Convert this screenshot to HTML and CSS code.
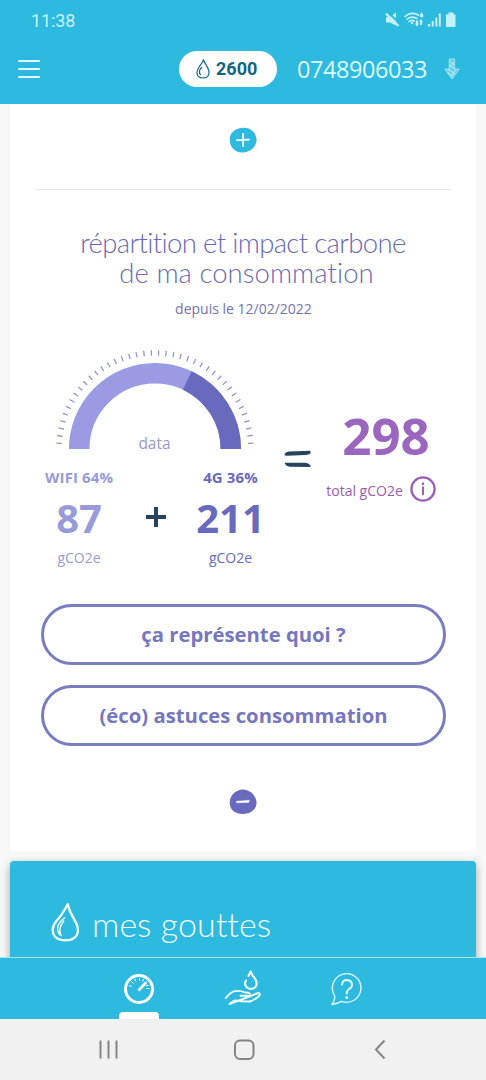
FILE: index.html
```html
<!DOCTYPE html>
<html lang="fr">
<head>
<meta charset="utf-8">
<title>Suivi conso</title>
<link rel="stylesheet" href="styles.css">
</head>
<body>
<div class="phone">
  <div class="status">
    <span class="time">11:38</span>
    <svg class="status-icons" width="74" height="18" viewBox="0 0 74 18">
      <g fill="#c5f1fb">
        <path d="M2 6h4l6-4.500v13L6 11.500H2z"/>
        <rect x="44" y="13" width="2.200" height="2.500"/><rect x="47.700" y="10" width="2" height="5.500"/><rect x="51.300" y="6.500" width="2" height="9"/><rect x="54.800" y="2.500" width="2" height="13"/>
        <path d="M64.500 1.500h5v2h2v12.500h-9.500V3.500h2.500z"/>
        <circle cx="28" cy="12" r="1.300"/>
        <path d="M37.500 1l1.800 3.200a1.800 1.800 0 1 1-3.500 0zM32 9.500h2v3h1.200L33 15.500l-2.200-3H32zM36 14v-3h-1.200L37 8l2.200 3H38v3z"/>
      </g>
      <path d="M4 1.500l11 10" stroke="#2eb9de" stroke-width="2"/>
      <path d="M2 2.500l12.500 12.500" stroke="#c5f1fb" stroke-width="2.200"/>
      <path d="M20.500 6q7-6.500 14.500-1.500M22.500 8.500q5-4.500 11-.7M24.500 11q3.500-3 6.500-.5" fill="none" stroke="#c5f1fb" stroke-width="1.600"/>
    </svg>
  </div>
  <header class="topbar">
    <svg class="menu" width="24" height="20" viewBox="0 0 24 20"><path d="M2 2h20M2 10h20M2 18h20" stroke="#dcf9ff" stroke-width="2.200" stroke-linecap="round"/></svg>
    <div class="points">
      <svg width="14" height="20" viewBox="0 0 14 20" fill="none" stroke="#146580" stroke-width="1.200"><path d="M7.500 1C6 5 1 9 1 13.500C1 17 3.500 19 7 19s6-2 6-5.500C13 9 9 5 7.500 1z"/><path d="M6 8c-3 3-3.500 6-1 8"/></svg>
      <span>2600</span>
    </div>
    <span class="number">0748906033</span>
    <svg class="arrow" width="16" height="22" viewBox="0 0 16 22">
      <path d="M5.200 1h5.500v10h4.500L8 21 .8 11H5.200z" fill="#6dd0e8" stroke="#a5e8f5" stroke-width=".9"/>
      <path d="M5.500 3l5 4M5.500 7l5 4M4 11l7 5M3 14l6 4M10.500 4l-5 5M12 12l-5 6" stroke="#d2f6fd" stroke-width=".7"/>
    </svg>
  </header>
  <main class="content">
    <section class="card">
      <div class="expand">
        <svg width="28" height="26" viewBox="0 0 28 26"><path d="M13 1C20 0 27 5 27.500 12S22 25 14 25.500S1 20 .7 13S6 1.500 13 1z" fill="#2eb9de"/><path d="M8 13.200l12-.6M14 7l.2 12" stroke="#fff" stroke-width="1.800" stroke-linecap="round"/></svg>
      </div>
      <h2 class="title"><span class="line1">répartition et impact carbone</span><span class="line2">de ma consommation</span></h2>
      <p class="since">depuis le 12/02/2022</p>
      <div class="result">
        <div class="breakdown">
          <div class="gauge">
            <svg width="200" height="101" viewBox="0 0 200 101" fill="none">
              <path d="M4 100a96 96 0 0 1 192 0" pathLength="180" stroke="#9294c6" stroke-width="5.500" stroke-dasharray=".75 3.686" stroke-dashoffset="-3.100"/>
              <path d="M24.200 100a75.800 75.800 0 0 1 151.600 0" stroke="#9a9be3" stroke-width="20.500"/>
              <path d="M24.200 100a75.800 75.800 0 0 1 151.600 0" pathLength="100" stroke="#696abe" stroke-width="20.500" stroke-dasharray="0 64 36 0"/>
            </svg>
            <span class="gauge-label">data</span>
          </div>
          <div class="sources">
            <div class="source wifi"><b class="share">WIFI 64%</b><b class="value">87</b><span class="unit">gCO2e</span></div>
            <svg class="plus" width="22" height="22" viewBox="0 0 22 22"><path d="M1 11h20M11 1v20" stroke="#27445c" stroke-width="4"/></svg>
            <div class="source mobile"><b class="share">4G 36%</b><b class="value">211</b><span class="unit">gCO2e</span></div>
          </div>
        </div>
        <svg class="equals" width="28" height="20" viewBox="0 0 28 20"><path d="M.5 5.500Q1 3 5 2.500L26.500 1.700V4q-.5 1.700-5 1.900L3 6.800Q.5 6.800.5 5.500zM.5 13.800h21q4 .5 5 3v1.300L6 17.800Q1.500 17.300.5 13.800z" fill="#27445c"/></svg>
        <div class="total">
          <b class="sum">298</b>
          <div class="total-row"><span>total gCO2e</span>
            <svg width="26" height="26" viewBox="0 0 26 26" fill="none"><circle cx="13" cy="13" r="11.600" stroke="#9760b5" stroke-width="2.300"/><path d="M13 10.500v8.500M13 6.500v2.500" stroke="#9760b5" stroke-width="2"/></svg>
          </div>
        </div>
      </div>
      <div class="actions">
        <button class="action">ça représente quoi ?</button>
        <button class="action">(éco) astuces consommation</button>
      </div>
      <div class="collapse">
        <svg width="28" height="26" viewBox="0 0 28 26"><path d="M13 .5C20 0 27 6 27.500 13S22 25 14 25S1 21 .7 14S6 1.500 13 .5z" fill="#696abe"/><path d="M7.500 12.200l13-1-.8 2.200-12.200.4z" fill="#fff" stroke="#fff" stroke-width=".4"/></svg>
      </div>
    </section>
    <section class="drops">
      <svg width="28" height="40" viewBox="0 0 28 40" fill="none" stroke="#f0fdff" stroke-width="2.400" stroke-linejoin="round"><path d="M16.700 2.200Q11 13 5 19.500Q1.800 23.500 1.800 28C1.800 35 7 38.300 14.500 38.300S27 34.500 27 28Q27 23.500 23 17Q18.500 10 16.700 2.200z"/><path d="M14 15.500C5 22 4.500 29.500 10.700 34M13 18.500C8.500 24 8 28 9.500 32" stroke-width="1.500"/></svg>
      <h2>mes gouttes</h2>
    </section>
  </main>
  <nav class="tabs">
    <div class="tab active">
      <svg width="32" height="32" viewBox="0 0 32 32" fill="none" stroke="#fff"><circle cx="16" cy="16" r="13.500" stroke-width="3"/><path d="M15.500 17.500l7.500-8" stroke-width="2.600"/><path d="M6 12.500l2.500 1M8.500 8.500l2 2M12 6l.8 2.500M16.500 5v3M20.500 6l-1 2.500M24 8.500l-2 1.500M25.500 12l-2.500 1M26.500 15.500h-3" stroke-width="1"/></svg>
    </div>
    <div class="tab">
      <svg width="38" height="38" viewBox="0 0 38 38" fill="none" stroke="#f0fdff" stroke-width="1.900" stroke-linejoin="round" stroke-linecap="round"><path d="M24.500 8L26.700 3.500Q28 7.500 31 10.500Q34 15.500 31.500 19Q27.500 22.500 23 19.500Q19.500 16.500 22 12.500" stroke-width="2.100"/><path d="M1.800 30Q5 25.500 9 23.700Q15 21.800 21 24.500Q26 24.200 26 26.200Q26 28 23 27.800H16.500M26 28.300L34 25Q36.500 25 35.500 27.500Q31.500 31.500 26 33.500Q17 33.500 11 32.500Q8.500 33.500 5.500 36z"/></svg>
    </div>
    <div class="tab">
      <svg width="34" height="34" viewBox="0 0 34 34" fill="none" stroke="#d9f8fe" stroke-width="1.400" stroke-linejoin="round" stroke-linecap="round"><path d="M4.500 22.500A14.300 14.300 0 1 1 11.500 28.300Q7.500 30.500 1.800 31.500Q5.500 27.500 4.500 22.500z"/><path d="M12 11.500Q12.500 7 17 7Q22 7.500 22 12Q22 14.500 19 16Q16.500 17.500 16.700 20.500" stroke-width="2"/><circle cx="16.700" cy="24.500" r=".8" fill="#d9f8fe"/></svg>
    </div>
  </nav>
  <footer class="system">
    <svg width="20" height="20" viewBox="0 0 20 20" fill="none" stroke="#858585" stroke-width="2"><path d="M1.500 .5v18M9.500 .5v18M17.500 .5v18"/></svg>
    <svg class="home" width="22" height="22" viewBox="0 0 22 22" fill="none" stroke="#858585" stroke-width="2"><rect x="2" y="1.500" width="18.500" height="18.500" rx="5"/></svg>
    <svg width="14" height="20" viewBox="0 0 14 20" fill="none" stroke="#858585" stroke-width="2"><path d="M11.500 .5L3 9.500l8.500 9"/></svg>
  </footer>
</div>
</body>
</html>
```
FILE: styles.css
```css
* { box-sizing: border-box; }
body { margin: 0; font-family: "Open Sans", sans-serif; background: #f8f8f8; }
h2, p { margin: 0; }
svg { display: block; flex: none; }
.phone { width: 486px; height: 1080px; display: flex; flex-direction: column; overflow: hidden; }

.status { height: 40px; flex: none; display: flex; align-items: flex-start; justify-content: space-between; padding: 11px 28px 0 31px; background: #2eb9de; }
.time { font: 18px/20px Roboto, sans-serif; color: #c5f1fb; letter-spacing: -.1px; }
.topbar { height: 64px; flex: none; display: flex; align-items: center; padding: 0 25px 6px 17px; background: #2eb9de; }
.points { display: flex; align-items: center; gap: 6px; width: 98px; height: 36px; margin-left: 138px; padding-left: 17px; border-radius: 18px; background: #fff; color: #146580; font: 700 18px/36px Roboto, sans-serif; }
.number { margin-left: 20px; width: 132px; font-size: 23.500px; letter-spacing: -.45px; color: #dcf9ff; white-space: nowrap; }
.arrow { margin-left: 15px; }

.content { flex: 1; min-height: 0; overflow: hidden; padding: 0 10px; }
.card { height: 747px; background: #fff; border-radius: 0 0 4px 4px; }
.expand { display: flex; justify-content: center; height: 86px; margin: 0 26px; padding-top: 23px; border-bottom: 1px solid #e6e6ea; }
.title { height: 62px; margin-top: 38px; font: 300 27.500px/30px Lato, sans-serif; color: #696ab2; text-align: center; white-space: nowrap; }
.title span { display: block; }
.line1 { letter-spacing: -.65px; }
.line2 { letter-spacing: .05px; padding-left: 7px; }
.since { margin-top: 8px; font-size: 14px; line-height: 22px; color: #7273b5; text-align: center; padding-left: 1px; }

.result { display: flex; height: 250px; margin-top: 29px; }
.breakdown { width: 264px; }
.gauge { display: flex; flex-direction: column; align-items: center; height: 118px; padding-left: 25px; }
.gauge-label { margin-top: -17px; font-size: 15.500px; line-height: 20px; color: #9899cd; }
.sources { display: flex; justify-content: space-between; align-items: flex-start; padding-left: 24px; }
.source { width: 90px; display: flex; flex-direction: column; align-items: center; text-align: center; }
.wifi { color: #999bd9; }
.mobile { color: #696abd; width: 87px; }
.share { font-size: 15px; line-height: 20px; letter-spacing: .1px; white-space: nowrap; }
.value { margin-top: 6px; font-size: 40px; line-height: 50px; }
.unit { margin-top: 5px; font-size: 14px; line-height: 20px; }
.plus { margin-top: 39px; }
.equals { margin: 100px 0 0 10px; }
.total { width: 140px; margin-top: 59px; padding-left: 8px; color: #9760b5; display: flex; flex-direction: column; align-items: center; }
.sum { font-size: 51px; line-height: 54px; color: #9b66bd; }
.total-row { display: flex; align-items: center; gap: 7px; margin: 14px 10px 0 0; font-size: 14px; line-height: 20px; white-space: nowrap; }
.total-row span { padding-top: 4px; }

.actions { display: flex; flex-direction: column; gap: 20px; padding: 5px 30px 0 31px; }
.action { height: 61px; padding: 0 0 2px; border: 3px solid #7b7cbd; border-radius: 31px; background: #fff; color: #7677bd; font: 700 20.300px/26px "Open Sans", sans-serif; }
.collapse { display: flex; justify-content: center; padding-top: 43px; }

.drops { display: flex; align-items: flex-start; gap: 13px; height: 140px; margin-top: 10px; padding: 41px 0 0 41px; border-radius: 4px; background: #2eb9de; box-shadow: 0 3px 8px rgba(0, 0, 0, .35); color: #f0fdff; }
.drops h2 { font: 300 34px/42px Lato, sans-serif; letter-spacing: .01px; padding-top: 1px; white-space: nowrap; }

.tabs { height: 62px; flex: none; display: flex; justify-content: center; gap: 64px; border-top: 1px solid #a5e9f8; background: #2eb9de; }
.tab { width: 40px; display: flex; flex-direction: column; align-items: center; padding-top: 15px; }
.tab:nth-child(2) { padding-top: 10px; }
.tab.active { justify-content: space-between; }
.tab.active::after { content: ""; width: 40px; height: 7px; border-radius: 4px 4px 0 0; background: #fff; }
.system { height: 61px; flex: none; display: flex; align-items: center; justify-content: space-between; padding: 0 99px; background: #f1f1f1; }
.home { margin-right: 4px; }
```
